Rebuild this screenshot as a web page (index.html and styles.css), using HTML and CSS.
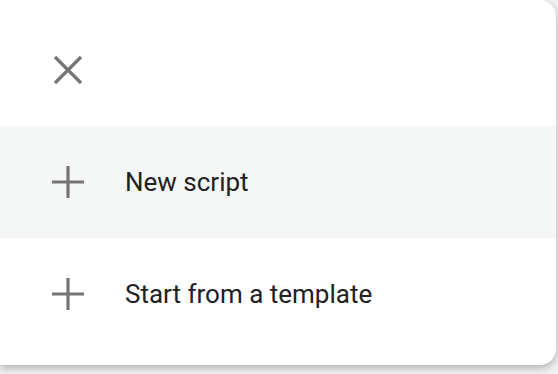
FILE: index.html
```html
<!DOCTYPE html>
<html>
<head>
<meta charset="utf-8">
<link rel="stylesheet" href="styles.css">
</head>
<body>
<div class="card">
  <div class="header">
    <svg class="icon" width="32" height="32" viewBox="0 0 32 32">
      <path d="M3 3L29 29M29 3L3 29" stroke="#757575" stroke-width="3.2" fill="none"/>
    </svg>
  </div>
  <div class="row active">
    <svg class="icon" width="32" height="32" viewBox="0 0 32 32">
      <path d="M0 16H32M16 0V32" stroke="#757575" stroke-width="3.2" fill="none"/>
    </svg>
    <span class="label">New script</span>
  </div>
  <div class="row">
    <svg class="icon" width="32" height="32" viewBox="0 0 32 32">
      <path d="M0 16H32M16 0V32" stroke="#757575" stroke-width="3.2" fill="none"/>
    </svg>
    <span class="label">Start from a template</span>
  </div>
</div>
</body>
</html>
```
FILE: styles.css
```css
html, body {
  margin: 0;
  padding: 0;
  background: #f2f2f2;
  width: 558px;
  height: 374px;
  overflow: hidden;
}
.card {
  width: 556px;
  background: #fff;
  border-radius: 0 16px 16px 0;
  box-shadow: 0 3px 8px rgba(0, 0, 0, 0.28);
  padding-bottom: 15px;
  font-family: Roboto, "Noto Sans", sans-serif;
}
.header {
  height: 126px;
  box-sizing: border-box;
  padding: 54px 0 0 52px;
}
.icon {
  display: block;
  flex: none;
}
.row {
  height: 112px;
  display: flex;
  align-items: center;
  padding-left: 52px;
}
.row.active {
  background: #f5f7f6;
}
.label {
  margin-left: 41px;
  font-size: 26px;
  color: #202124;
  letter-spacing: 0;
}
```
